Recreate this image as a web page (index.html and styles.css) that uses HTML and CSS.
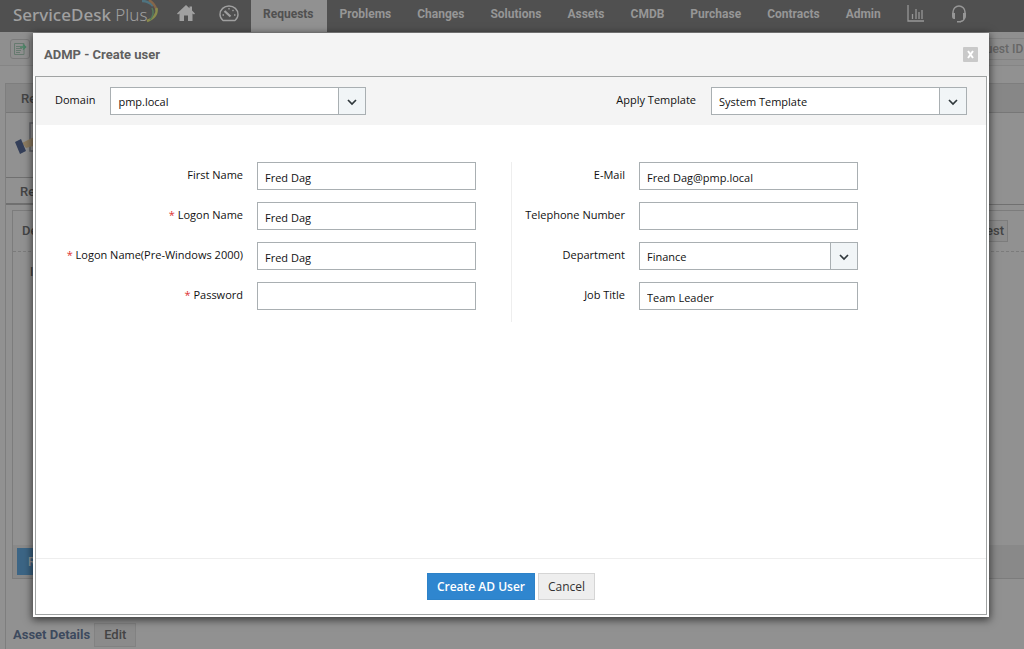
FILE: index.html
```html
<!DOCTYPE html>
<html lang="en">
<head>
<meta charset="utf-8">
<title>ServiceDesk Plus</title>
<link rel="stylesheet" href="styles.css">
</head>
<body>
<div class="page">
  <header class="topbar">
    <a class="logo" href="#">ServiceDesk <span class="logo-light">Plus</span>
      <svg class="swoosh" width="20" height="28" viewBox="0 0 20 28" fill="none" stroke-width="2.4"><path d="M1 1Q8 1 12 6" stroke="#4f7380"/><path d="M8 0Q14 4 15.500 10" stroke="#85664a"/><path d="M15.500 8Q17 17 6 21" stroke="#8a8b4c"/><path d="M11 8Q14 14 9 20" stroke="#557a5c" stroke-width="1.500"/></svg>
    </a>
    <a class="icon-link home" href="#" aria-label="Home"><svg width="18" height="16" viewBox="0 0 18 16" fill="#a0a0a0"><path d="M9 0 0 8.500 1 9.500 2.500 8.500V16H7V10.500H11V16H15.500V8.500L17 9.500 18 8.500 15 5.600V1.500H12.500V3.300Z"/></svg></a>
    <a class="icon-link gauge" href="#" aria-label="Dashboard"><svg width="20" height="17" viewBox="0 0 20 17" fill="none" stroke="#a0a0a0" stroke-width="1.400"><path d="M4 15.500Q1 13 1 9.500C1 4.500 5 1 10 1S19 4.500 19 9.500Q19 13 16 15.500Z" stroke-linejoin="round"/><path d="M5.500 6 11.500 11.500" stroke-width="2.200"/><path d="M10 3V4.500M3.500 10H5M15 10H16.500M13.500 6 14.500 5"/></svg></a>
    <nav class="nav">
      <a class="active" href="#">Requests</a>
      <a href="#">Problems</a>
      <a href="#">Changes</a>
      <a href="#">Solutions</a>
      <a href="#">Assets</a>
      <a href="#">CMDB</a>
      <a href="#">Purchase</a>
      <a href="#">Contracts</a>
      <a href="#">Admin</a>
    </nav>
    <a class="icon-link chart" href="#" aria-label="Reports"><svg width="17" height="17" viewBox="0 0 17 17" fill="none" stroke="#969696" stroke-width="1.300"><path d="M1 0V16H17M5.500 9V14M9 4V14M12 7V14M15 5V14"/></svg></a>
    <a class="icon-link" href="#" aria-label="Support"><svg width="16" height="18" viewBox="0 0 16 18" fill="none" stroke="#969696" stroke-width="1.500"><path d="M2 10V7A6 6 0 0 1 14 7V10"/><path d="M13.500 13Q13 16 9.500 16.500"/><path d="M1 8H4V14H3Q1 14 1 11ZM15 8H12V14H13Q15 14 15 11ZM6 16H10V17.500H6Z" fill="#969696" stroke="none"/></svg></a>
  </header>

  <div class="toolbar">
    <a class="new-item" href="#" aria-label="New request"><svg width="14" height="14" viewBox="0 0 14 14" fill="none" stroke="#667a6f"><path d="M1.500 1.500H11V12.500H1.500Z"/><path d="M3 4.500H7M3 6.500H9M3 8.500H8M3 10.500H7"/><path d="M7 5H12M10 2.500 12.500 5 10 7.500" stroke="#4b8366" stroke-width="1.500"/></svg></a>
    <span class="search">Request ID</span>
  </div>

  <main class="panel">
    <div class="panel-head">Re</div>
    <div class="summary"><svg width="40" height="40" viewBox="0 0 40 40"><path d="M15 4H39V32H15Z" fill="#919191" stroke="#626368" stroke-width="1.500"/><path d="M7 24 13 21 17 19 25 18V25L11 29Z" fill="#8c7b60"/><path d="M0 23 6 20 11 32 5 35Z" fill="#343f59"/></svg></div>
    <div class="tabs"><div class="tab">Re</div></div>
    <section class="card">
      <div class="card-head"><span>De</span><button class="small-button" type="button">Request</button></div>
      <div class="card-body">I</div>
      <div class="card-foot"><button class="reply" type="button">Reply</button></div>
    </section>
    <div class="asset"><a href="#">Asset Details</a><button class="edit" type="button">Edit</button></div>
  </main>
</div>

<form class="dialog" role="dialog" aria-labelledby="dialog-title">
  <div class="dialog-head">
    <h1 id="dialog-title">ADMP - Create user</h1>
    <button class="close" type="button" aria-label="Close"><svg width="9" height="9" viewBox="0 0 9 9" fill="none" stroke="#fff" stroke-width="2"><path d="M2 1 7 8M7 1 2 8"/></svg></button>
  </div>
  <div class="dialog-body">
    <div class="filters">
      <label for="domain">Domain</label>
      <span class="select wide"><select id="domain"><option>pmp.local</option></select><svg class="chevron" width="10" height="7" viewBox="0 0 10 7"><path d="M1 1 5 5 9 1"/></svg></span>
      <label class="push" for="template">Apply Template</label>
      <span class="select wide"><select id="template"><option>System Template</option></select><svg class="chevron" width="10" height="7" viewBox="0 0 10 7"><path d="M1 1 5 5 9 1"/></svg></span>
    </div>
    <div class="fields">
      <div class="column">
        <div class="field"><label for="first">First Name</label><input id="first" type="text" value="Fred Dag"></div>
        <div class="field"><label for="logon"><span class="req">*</span> Logon Name</label><input id="logon" type="text" value="Fred Dag"></div>
        <div class="field"><label for="logon2000"><span class="req">*</span> Logon Name(Pre-Windows 2000)</label><input id="logon2000" type="text" value="Fred Dag"></div>
        <div class="field"><label for="password"><span class="req">*</span> Password</label><input id="password" type="password"></div>
      </div>
      <div class="column second">
        <div class="field"><label for="email">E-Mail</label><input id="email" type="text" value="Fred Dag@pmp.local"></div>
        <div class="field"><label for="phone">Telephone Number</label><input id="phone" type="text"></div>
        <div class="field"><label for="department">Department</label><span class="select"><select id="department"><option>Finance</option></select><svg class="chevron" width="10" height="7" viewBox="0 0 10 7"><path d="M1 1 5 5 9 1"/></svg></span></div>
        <div class="field"><label for="job">Job Title</label><input id="job" type="text" value="Team Leader"></div>
      </div>
    </div>
    <div class="actions">
      <button class="primary" type="button">Create AD User</button>
      <button class="secondary" type="button">Cancel</button>
    </div>
  </div>
</form>
</body>
</html>
```

FILE: styles.css
```css
* { box-sizing: border-box; }
body { margin: 0; min-height: 100vh; background: #919191; font: 500 12px/16px Roboto, sans-serif; color: #444; position: relative; overflow: hidden; }
a { color: inherit; text-decoration: none; }
button, input, select { font: inherit; color: inherit; margin: 0; border-radius: 0; }
svg { display: block; }
.page { display: flex; flex-direction: column; height: 100vh; }

.topbar { display: flex; align-items: flex-start; height: 32px; flex: none; background: #505050; color: #969696; }
.logo { position: relative; width: 164px; padding-left: 13px; font: 500 17px/29px "Noto Sans", sans-serif; color: #a0a0a0; white-space: nowrap; }
.logo-light { font-weight: 300; }
.swoosh { position: absolute; left: 141px; top: 0; }
.icon-link { padding-top: 5px; }
.home { width: 42px; padding-left: 13px; }
.gauge { width: 45px; padding-left: 13px; }
.nav { display: flex; gap: 1px; font-weight: 700; }
.nav a { height: 32px; padding: 0 13px 0 12px; line-height: 28px; }
.nav .active { background: #919191; color: #505050; }
.chart { padding-left: 13px; margin-right: 27px; }

.toolbar { display: flex; justify-content: space-between; align-items: center; flex: none; height: 34px; padding-left: 10px; border-bottom: 1px solid #858585; background: #8f8f8f; }
.new-item { padding: 2px; border: 1px solid #7b7b7b; border-radius: 3px; }
.search { width: 62px; padding: 2px 0 2px 2px; border: 1px solid #838383; border-right: 0; color: #666; white-space: nowrap; }

.panel { display: flex; flex-direction: column; flex: 1; margin: 17px 0 0 5px; border: 1px solid #7e7e7e; border-width: 1px 0 0 1px; }
.panel-head { height: 29px; padding: 0 15px; line-height: 30px; font-size: 13px; background: #878787; border-bottom: 1px solid #777; }
.summary { height: 64px; padding: 6px 9px; }
.tabs { display: flex; height: 28px; border-bottom: 1px solid #707070; }
.tab { padding: 0 14px; line-height: 28px; font-size: 13px; border: 1px solid #707070; border-left: 0; }
.card { display: flex; flex-direction: column; flex: 1; margin: 5px 0 0 6px; border: 1px solid #7c7c7c; border-right: 0; }
.card-head { display: flex; justify-content: space-between; align-items: center; height: 41px; padding: 0 16px 0 9px; border-bottom: 1px dashed #7b7b7b; font-size: 13px; }
.small-button { height: 22px; padding: 0 3px; border: 1px solid #7c7c7c; background: #8c8c8c; }
.card-body { flex: 1; padding: 12px 17px; }
.card-foot { flex: none; height: 33px; padding: 3px 4px; background: #898989; }
.reply { height: 27px; padding: 0 11px; border: 0; background: #3c6585; color: #999; }
.asset { display: flex; align-items: center; flex: none; height: 70px; padding: 41px 7px 0; gap: 4px; font-size: 13px; font-weight: 700; color: #3d4a5e; }
.edit { height: 24px; padding: 0 9px; border: 1px solid #828282; background: #8b8b8b; color: #444; font-weight: 500; }

.dialog { position: absolute; inset: 33px 35px 32px 33px; display: flex; flex-direction: column; padding: 0 2px 2px; background: #fff; box-shadow: 0 2px 8px 1px rgba(0, 0, 0, .6); font: 400 11px/16px "Open Sans", sans-serif; color: #111; }
.dialog-head { display: flex; align-items: center; justify-content: space-between; flex: none; height: 43px; margin: 0 -2px; padding: 0 11px; background: #f4f4f4; }
.dialog-head h1 { margin: 0; font: 700 13px/16px Roboto, sans-serif; color: #606060; }
.close { display: grid; place-items: center; width: 15px; height: 15px; padding: 0; border: 0; background: #c9c9c9; border-radius: 1px; }
.dialog-body { display: flex; flex-direction: column; flex: 1; border: 1px solid #a0a3a3; }
.filters { display: flex; align-items: center; gap: 15px; flex: none; height: 48px; padding: 0 19px; background: #f4f4f4; }
.push { margin-left: auto; }
.select { position: relative; width: 219px; }
.wide { width: 256px; }
select, input { width: 100%; height: 28px; padding: 2px 7px 0; border: 1px solid #a9afb2; background: #fff; outline: 0; }
select { display: block; appearance: none; background: linear-gradient(#a9afb2, #a9afb2) right 26px top / 1px 100% no-repeat, linear-gradient(#f1f5f7, #f1f5f7) right top / 26px 100% no-repeat, #fff; }
.chevron { position: absolute; right: 9px; top: 12px; fill: none; stroke: #30383c; stroke-width: 1.700; pointer-events: none; }
.fields { display: grid; grid-template-columns: 1fr 1fr; flex: 1; align-items: start; padding-top: 37px; }
.column { display: grid; align-content: start; gap: 12px; height: 160px; padding-right: 35px; }
.second { justify-content: start; padding: 0 0 0 10px; border-left: 1px solid #eee; }
.field { display: grid; grid-template-columns: 1fr 219px; align-items: center; gap: 14px; text-align: right; white-space: nowrap; }
.field label, .filters label { padding-bottom: 2px; }
.second .field { grid-template-columns: 103px 219px; }
.req { color: #d33; }
.actions { display: flex; justify-content: center; gap: 3px; flex: none; padding: 14px 0; border-top: 1px solid #eee; font-size: 12px; }
.actions button { height: 27px; padding: 0 9px; border: 1px solid #d5d5d5; background: #eee; color: #333; }
.actions .primary { border-color: #2d82c8; background: #2f86cf; color: #fff; font-weight: 600; }
```
